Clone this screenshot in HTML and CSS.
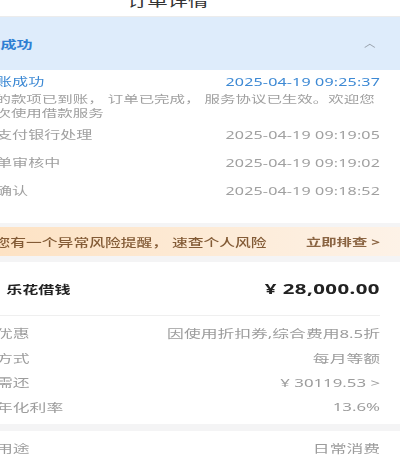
FILE: index.html
```html
<!DOCTYPE html>
<html lang="zh-CN">
<head>
    <meta charset="UTF-8">
    <title>订单详情</title>
    <link rel="stylesheet" href="styles.css">
</head>
<body>

<div class="page">
    <div class="topbar">订单详情</div>

    <div class="status-head">
        <span class="status-title">放款成功</span>
        <svg class="chevron" width="8" height="5" viewBox="0 0 8 5">
            <path d="M0.5 4.5 L4 1.2 L7.5 4.5" fill="none" stroke="#9aa3ad" stroke-width="0.8"/>
        </svg>
    </div>

    <div class="steps">
        <div class="step first">
            <div class="step-row active">
                <span>到账成功</span>
                <span class="time">2025-04-19 09:25:37</span>
            </div>
            <p class="step-desc">您的款项已到账， 订单已完成， 服务协议已生效。欢迎您再次使用借款服务</p>
        </div>
        <div class="step-row">
            <span>待支付银行处理</span>
            <span class="time">2025-04-19 09:19:05</span>
        </div>
        <div class="step-row">
            <span>订单审核中</span>
            <span class="time">2025-04-19 09:19:02</span>
        </div>
        <div class="step-row">
            <span>已确认</span>
            <span class="time">2025-04-19 09:18:52</span>
        </div>
    </div>

    <div class="risk-bar">
        <span class="risk-icon"></span>
        <span class="risk-text">您有一个异常风险提醒， 速查个人风险</span>
        <span class="risk-link">立即排查 &gt;</span>
    </div>

    <div class="card">
        <div class="product">
            <span class="product-name">乐花借钱</span>
            <span class="amount">¥ 28,000.00</span>
        </div>
        <div class="details">
            <div class="detail-row"><span>借款优惠</span><span>因使用折扣券,综合费用8.5折</span></div>
            <div class="detail-row"><span>还款方式</span><span>每月等额</span></div>
            <div class="detail-row"><span>预计需还</span><span>¥ 30119.53 &gt;</span></div>
            <div class="detail-row"><span>综合年化利率</span><span>13.6%</span></div>
        </div>
    </div>

    <div class="card last">
        <div class="details">
            <div class="detail-row"><span>借款用途</span><span>日常消费</span></div>
        </div>
    </div>
</div>

</body>
</html>
```

FILE: styles.css
```css
body {
    margin: 0;
    padding: 0;
    width: 400px;
    height: 455px;
    overflow: hidden;
    background: #f4f4f5;
    font-family: "Noto Sans", "Noto Sans CJK SC", sans-serif;
    color: #a0a0a0;
}
/* the screenshot is a stretched crop of the phone page */
.page {
    margin-left: -58px;
    margin-top: -15px;
    width: 314px;
    transform: scaleX(1.46);
    transform-origin: 0 0;
}
.topbar {
    height: 31px;
    line-height: 31px;
    background: #fff;
    border-bottom: 1px solid #ececec;
    text-align: center;
    padding-right: 5px;
    font-size: 14px;
    color: #333;
}
.status-head {
    height: 53px;
    background: #deecfb;
    display: flex;
    align-items: center;
    justify-content: space-between;
    padding: 0 17px 0 18px;
}
.status-title {
    font-size: 11px;
    font-weight: bold;
    color: #2f7fd3;
}
.chevron {
    margin-top: 3px;
}
.steps {
    background: #fff;
    padding: 0 14px 19px 26px;
}
.step-row {
    display: flex;
    justify-content: space-between;
    align-items: center;
    height: 28px;
    font-size: 11px;
}
.step.first .step-row {
    height: 22px;
}
.step-row.active {
    color: #3d89d4;
}
.time {
    font-size: 11px;
    letter-spacing: 0.1px;
}
.step-desc {
    margin: 0;
    font-size: 10.6px;
    line-height: 14px;
}
.risk-bar {
    margin-top: 4px;
    height: 29px;
    display: flex;
    align-items: center;
    padding: 0 14px;
    background: linear-gradient(to right, #fde0bf, #fdebd7 60%, #fdf2e7);
    color: #835b36;
    font-size: 10.8px;
    font-weight: 500;
}
.risk-icon {
    width: 14px;
    height: 14px;
    margin-right: 8px;
}
.risk-text {
    flex: 1;
}
.risk-link {
    font-size: 10.5px;
    font-weight: bold;
    color: #8a6442;
}
.card {
    margin-top: 6px;
    background: #fff;
    padding: 0 14px;
}
.card.last {
    margin-top: 7px;
}
.product {
    height: 53px;
    display: flex;
    align-items: center;
    justify-content: space-between;
    border-bottom: 1px solid #efefef;
    padding-left: 30px;
}
.product-name {
    font-size: 11px;
    font-weight: bold;
    color: #222;
}
.amount {
    font-size: 14px;
    font-weight: bold;
    color: #222;
    letter-spacing: 0.3px;
}
.details {
    padding: 5px 0;
}
.detail-row {
    height: 24.5px;
    display: flex;
    justify-content: space-between;
    align-items: center;
    font-size: 11.5px;
    color: #9c9c9c;
}
```
